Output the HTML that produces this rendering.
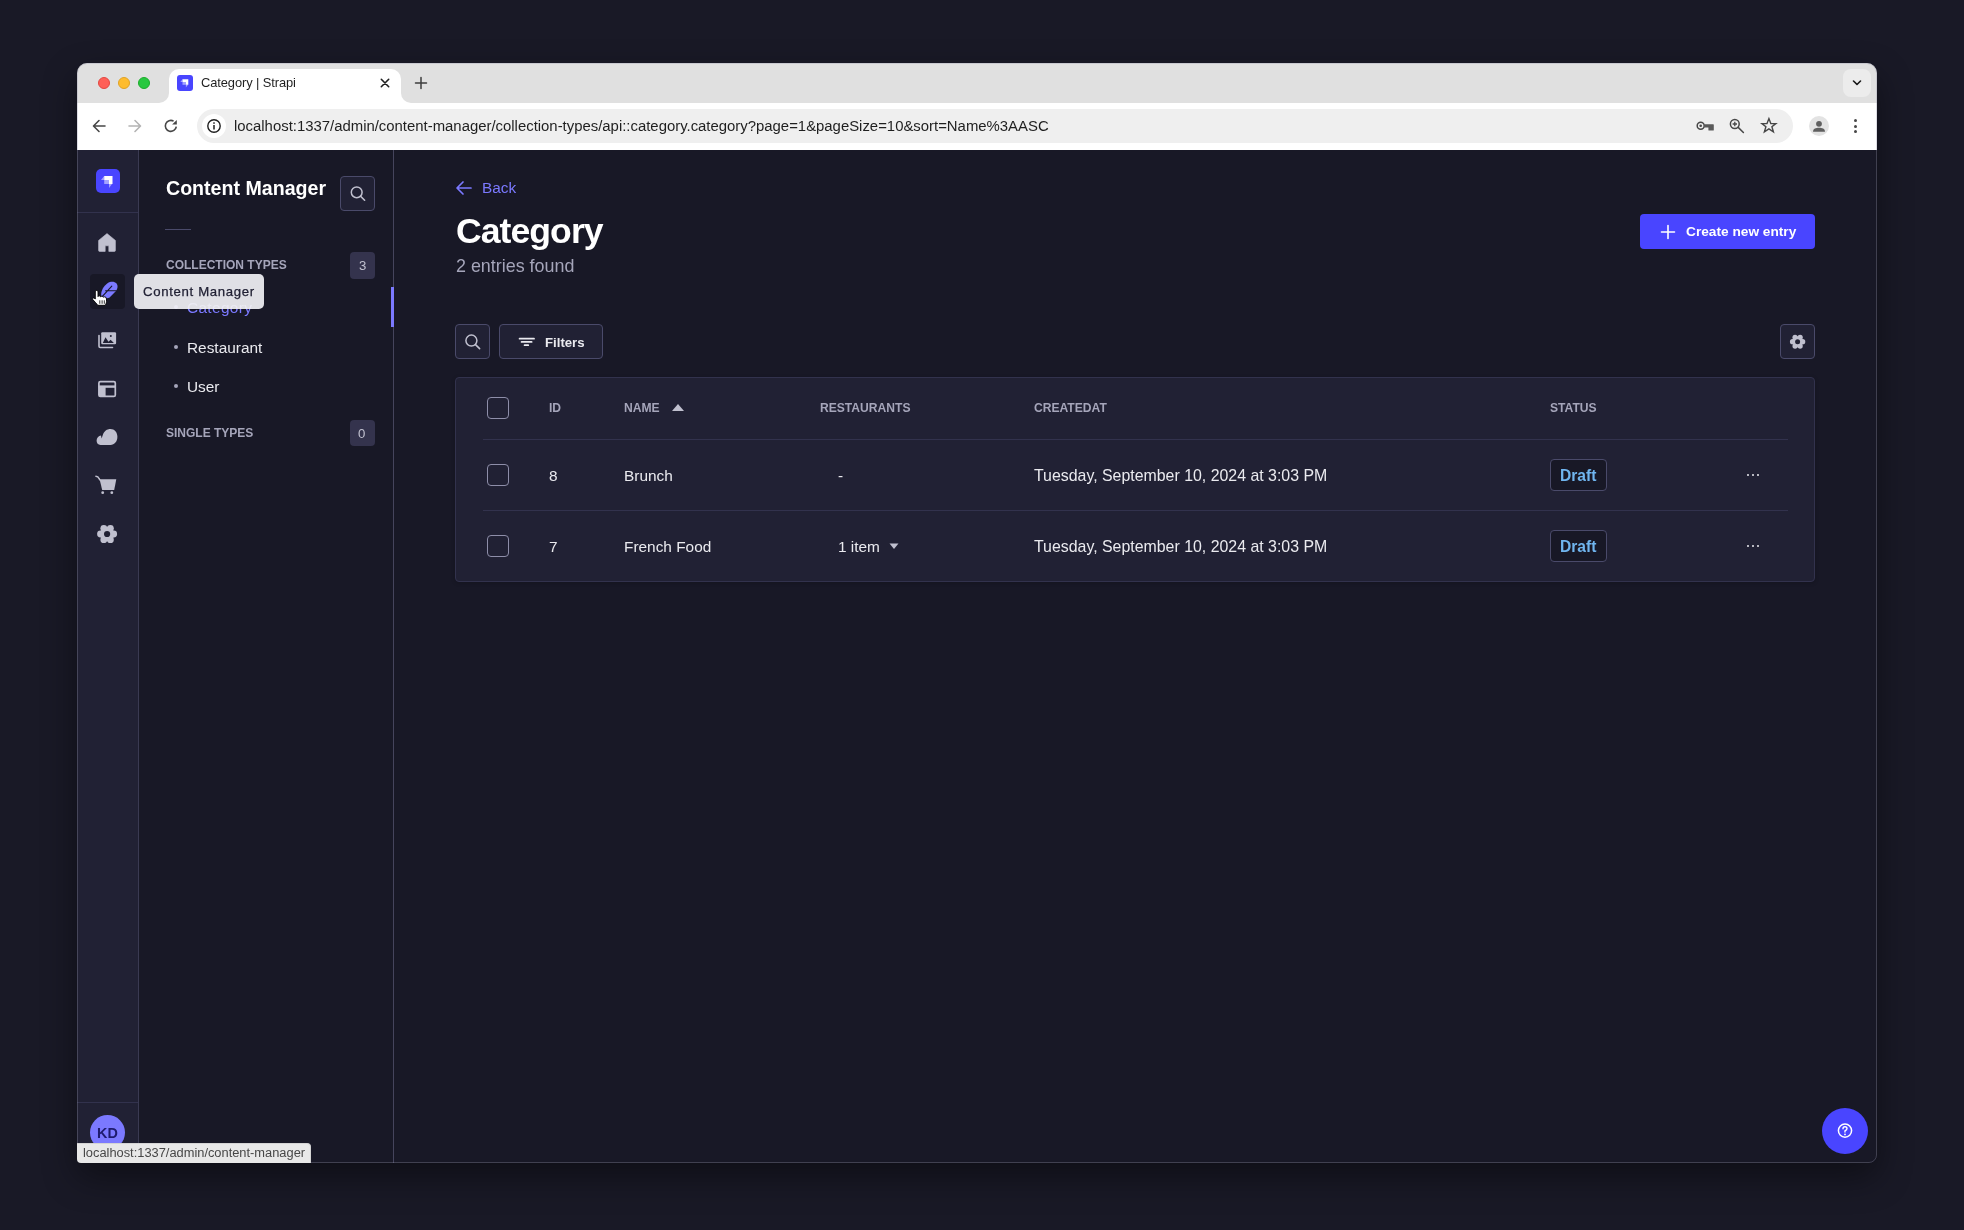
<!DOCTYPE html>
<html><head><meta charset="utf-8">
<style>
*{box-sizing:border-box;margin:0;padding:0}
html,body{width:1964px;height:1230px;overflow:hidden}
body{background:#191926;font-family:"Liberation Sans",sans-serif;position:relative}
.a{position:absolute}
.win{left:77px;top:63px;width:1800px;height:1100px;border-radius:10px 10px 8px 8px;overflow:hidden;background:#181826;box-shadow:0 14px 34px rgba(0,0,0,.42)}
.tabbar{left:77px;top:63px;width:1800px;height:40px;background:#e0e0e0;border-radius:10px 10px 0 0}
.toolbar{left:77px;top:103px;width:1800px;height:47px;background:#fff}
.dot{width:12px;height:12px;border-radius:50%}
.t{white-space:nowrap;line-height:1;will-change:transform}
</style></head>
<body>
<div class="a win"></div>
<div class="a tabbar"></div>
<div class="a toolbar"></div>
<!-- ============ APP ============ -->
<div class="a" style="left:77px;top:150px;width:1800px;height:1013px;background:#181826;border-radius:0 0 8px 8px;overflow:hidden"></div>
<!-- left nav -->
<div class="a" style="left:77px;top:150px;width:62px;height:1013px;background:#212134;border-right:1px solid #3a3a52;border-radius:0 0 0 10px"></div>
<div class="a" style="left:77px;top:212px;width:61px;height:1px;background:#32324d"></div>
<div class="a" style="left:77px;top:1102px;width:61px;height:1px;background:#32324d"></div>
<div class="a" style="left:96px;top:169px;width:24px;height:24px;background:#4945ff;border-radius:5px"></div>
<!-- subnav -->
<div class="a" style="left:393px;top:150px;width:1px;height:1013px;background:#45445c"></div>
<div class="a t" style="left:165.6px;top:179.1px;font-size:19.6px;color:#ffffff;font-weight:700;">Content Manager</div>
<div class="a" style="left:340px;top:176px;width:35px;height:35px;border:1px solid #4a4a6a;background:#212134;border-radius:4px"></div>
<div class="a" style="left:165px;top:228.5px;width:26px;height:1px;background:#4a4a6a"></div>
<div class="a t" style="left:165.6px;top:258.84px;font-size:12px;color:#a5a5ba;font-weight:700;">COLLECTION TYPES</div>
<div class="a" style="left:350px;top:252px;width:25px;height:26.5px;background:#34334d;border-radius:4px"></div>
<div class="a t" style="left:358.6px;top:258.83px;font-size:13.2px;color:#c0c0cf;font-weight:400;">3</div>
<div class="a t" style="left:187px;top:299.96px;font-size:15.4px;color:#7b79ff;font-weight:400;letter-spacing:0.35px">Category</div>
<div class="a" style="left:174px;top:304px;width:4px;height:4px;background:#7b79ff;border-radius:50%"></div>
<div class="a" style="left:391px;top:287px;width:3px;height:40px;background:#7b79ff"></div>
<div class="a t" style="left:187px;top:339.96px;font-size:15.4px;color:#eaeaef;font-weight:400;">Restaurant</div>
<div class="a" style="left:174px;top:344.5px;width:4px;height:4px;background:#a5a5ba;border-radius:50%"></div>
<div class="a t" style="left:187px;top:378.96px;font-size:15.4px;color:#eaeaef;font-weight:400;">User</div>
<div class="a" style="left:174px;top:383.5px;width:4px;height:4px;background:#a5a5ba;border-radius:50%"></div>
<div class="a t" style="left:165.6px;top:426.84px;font-size:12px;color:#a5a5ba;font-weight:700;">SINGLE TYPES</div>
<div class="a" style="left:350px;top:419.5px;width:25px;height:26.5px;background:#34334d;border-radius:4px"></div>
<div class="a t" style="left:358.3px;top:426.83px;font-size:13.2px;color:#c0c0cf;font-weight:400;">0</div>
<svg class="a" style="left:455px;top:180px" width="18" height="16" viewBox="0 0 18 16"><path d="M16 8H2.5M8 2L2 8L8 14" stroke="#7b79ff" stroke-width="1.7" fill="none" stroke-linecap="round" stroke-linejoin="round"/></svg>
<div class="a t" style="left:482.3px;top:180.46px;font-size:15.4px;color:#7b79ff;font-weight:400;">Back</div>
<div class="a t" style="left:455.5px;top:214.36px;font-size:35.6px;color:#ffffff;font-weight:700;letter-spacing:-0.95px">Category</div>
<div class="a t" style="left:456px;top:258.25px;font-size:17.9px;color:#a5a5ba;font-weight:400;">2 entries found</div>
<div class="a" style="left:1640px;top:214px;width:175px;height:35px;background:#4945ff;border-radius:4px"></div>
<svg class="a" style="left:1660px;top:224px" width="16" height="16" viewBox="0 0 16 16"><path d="M8 1.5V14.5M1.5 8H14.5" stroke="#fff" stroke-width="1.6" stroke-linecap="round"/></svg>
<div class="a t" style="left:1686px;top:225.20px;font-size:13.7px;color:#ffffff;font-weight:700;">Create new entry</div>
<div class="a" style="left:455px;top:324px;width:35px;height:35px;border:1px solid #4a4a6a;background:#212134;border-radius:4px"></div>
<div class="a" style="left:499px;top:324px;width:104px;height:35px;border:1px solid #4a4a6a;background:#212134;border-radius:4px"></div>
<div class="a t" style="left:544.6px;top:335.83px;font-size:13.2px;color:#eaeaef;font-weight:700;">Filters</div>
<div class="a" style="left:1780px;top:324px;width:35px;height:35px;border:1px solid #4a4a6a;background:#212134;border-radius:4px"></div>
<div class="a" style="left:455px;top:377px;width:1360px;height:205px;background:#212134;border:1px solid #32324d;border-radius:4px;box-shadow:0 1px 4px rgba(0,0,0,.2)"></div>
<div class="a" style="left:483px;top:439px;width:1305px;height:1px;background:#32324d"></div>
<div class="a" style="left:483px;top:510px;width:1305px;height:1px;background:#32324d"></div>
<div class="a" style="left:487px;top:397px;width:22px;height:22px;border:1px solid #8e8ea9;border-radius:4px;background:#212134"></div>
<div class="a" style="left:487px;top:464px;width:22px;height:22px;border:1px solid #8e8ea9;border-radius:4px;background:#212134"></div>
<div class="a" style="left:487px;top:535px;width:22px;height:22px;border:1px solid #8e8ea9;border-radius:4px;background:#212134"></div>
<div class="a t" style="left:549.2px;top:402.26px;font-size:12.1px;color:#a5a5ba;font-weight:700;">ID</div>
<div class="a t" style="left:624.3px;top:402.26px;font-size:12.1px;color:#a5a5ba;font-weight:700;">NAME</div>
<div class="a t" style="left:819.7px;top:402.26px;font-size:12.1px;color:#a5a5ba;font-weight:700;">RESTAURANTS</div>
<div class="a t" style="left:1033.8px;top:402.26px;font-size:12.1px;color:#a5a5ba;font-weight:700;">CREATEDAT</div>
<div class="a t" style="left:1549.5px;top:402.26px;font-size:12.1px;color:#a5a5ba;font-weight:700;">STATUS</div>
<svg class="a" style="left:671px;top:403px" width="14" height="9" viewBox="0 0 14 9"><path d="M1 8L7 1L13 8Z" fill="#c0c0cf"/></svg>
<div class="a t" style="left:549.3px;top:467.96px;font-size:15.4px;color:#eaeaef;font-weight:400;">8</div>
<div class="a t" style="left:624.3px;top:467.96px;font-size:15.4px;color:#eaeaef;font-weight:400;">Brunch</div>
<div class="a t" style="left:837.5px;top:467.96px;font-size:15.4px;color:#eaeaef;font-weight:400;">-</div>
<div class="a t" style="left:1033.8px;top:467.54px;font-size:15.9px;color:#eaeaef;font-weight:400;">Tuesday, September 10, 2024 at 3:03 PM</div>
<div class="a" style="left:1550px;top:459px;width:57px;height:32px;border:1px solid #4a4a6a;background:#181826;border-radius:4px"></div>
<div class="a t" style="left:1559.8px;top:467.79px;font-size:15.6px;color:#70b5ef;font-weight:700;">Draft</div>
<div class="a" style="left:1746.5px;top:474px;width:2.4px;height:2.4px;background:#eaeaef;border-radius:50%"></div>
<div class="a" style="left:1751.5px;top:474px;width:2.4px;height:2.4px;background:#eaeaef;border-radius:50%"></div>
<div class="a" style="left:1756.5px;top:474px;width:2.4px;height:2.4px;background:#eaeaef;border-radius:50%"></div>
<div class="a t" style="left:549.3px;top:538.96px;font-size:15.4px;color:#eaeaef;font-weight:400;">7</div>
<div class="a t" style="left:624.3px;top:538.96px;font-size:15.4px;color:#eaeaef;font-weight:400;">French Food</div>
<div class="a t" style="left:837.5px;top:538.96px;font-size:15.4px;color:#eaeaef;font-weight:400;">1 item</div>
<div class="a t" style="left:1033.8px;top:538.54px;font-size:15.9px;color:#eaeaef;font-weight:400;">Tuesday, September 10, 2024 at 3:03 PM</div>
<div class="a" style="left:1550px;top:530px;width:57px;height:32px;border:1px solid #4a4a6a;background:#181826;border-radius:4px"></div>
<div class="a t" style="left:1559.8px;top:538.79px;font-size:15.6px;color:#70b5ef;font-weight:700;">Draft</div>
<div class="a" style="left:1746.5px;top:545px;width:2.4px;height:2.4px;background:#eaeaef;border-radius:50%"></div>
<div class="a" style="left:1751.5px;top:545px;width:2.4px;height:2.4px;background:#eaeaef;border-radius:50%"></div>
<div class="a" style="left:1756.5px;top:545px;width:2.4px;height:2.4px;background:#eaeaef;border-radius:50%"></div>
<svg class="a" style="left:888px;top:542px" width="12" height="8" viewBox="0 0 12 8"><path d="M1.5 1.5H10.5L6 7Z" fill="#c0c0cf"/></svg>
<div class="a" style="left:1822px;top:1108px;width:46px;height:46px;background:#4945ff;border-radius:50%"></div>
<div class="a" style="left:90px;top:1115px;width:35px;height:35px;background:#7b79ff;border-radius:50%"></div>
<div class="a t" style="left:97.3px;top:1125.81px;font-size:14.4px;color:#1e1b6e;font-weight:700;">KD</div>
<svg class="a" style="left:96px;top:169px" width="24" height="24" viewBox="96 169 24 24"><path d="M104.2 175.9H112.5V184H109V180H104.2Z" fill="#fff"/><path d="M101 180L104.2 175.9V180Z" fill="#fff" opacity=".5"/><path d="M104.2 180H109V184H104.2Z" fill="#fff" opacity=".5"/><path d="M109 184H112L109 188Z" fill="#fff" opacity=".5"/></svg>
<svg class="a" style="left:96px;top:231px" width="22" height="22" viewBox="96 231 22 22"><path d="M107 233.6L115.4 240.4V250.4Q115.4 251.4 114.4 251.4H108.8V245.8H105.2V251.4H99.6Q98.6 251.4 98.6 250.4V240.4Z" fill="#c0c0cf" stroke="#c0c0cf" stroke-width=".6" stroke-linejoin="round"/></svg>
<div class="a" style="left:90px;top:274px;width:35px;height:35px;background:#181826;border-radius:4px"></div>
<svg class="a" style="left:98px;top:279px" width="22" height="22" viewBox="98 279 22 22"><path d="M101.2 295.5C100.8 291 103.5 286 107.5 283.2C110.5 281.2 114.5 281.2 116.4 283.3C118.2 285.3 117.8 288.5 116 291L109.6 297.6C107.5 298.6 103.2 298.6 101.2 295.5Z" fill="#7b79ff"/><path d="M101 297.8L111.8 286.2M105.6 290.8H116.4" stroke="#181826" stroke-width="1.1" stroke-linecap="round"/></svg>
<svg class="a" style="left:96px;top:330px" width="22" height="20" viewBox="96 330 22 20"><path d="M99 335.5V346.3Q99 347.5 100.2 347.5H112.5" stroke="#c0c0cf" stroke-width="1.6" fill="none" stroke-linecap="round"/><rect x="101.2" y="332.2" width="14.9" height="12" rx="1.2" fill="#c0c0cf"/><path d="M102.8 343L105.5 337.2L108.5 341.8L110.6 339.8L113.9 343Z" fill="#212134"/><circle cx="110.8" cy="336" r="1" fill="#212134"/></svg>
<svg class="a" style="left:96px;top:378px" width="22" height="22" viewBox="96 378 22 22"><rect x="98.9" y="381.6" width="16.4" height="14.8" rx="1.5" stroke="#c0c0cf" stroke-width="1.7" fill="none"/><rect x="98.5" y="385.4" width="17" height="2.4" fill="#c0c0cf"/><rect x="99" y="387" width="6.6" height="9" fill="#c0c0cf"/></svg>
<svg class="a" style="left:94px;top:426px" width="26" height="22" viewBox="94 426 26 22"><path d="M100.5 445C98 445 96.6 443 96.6 440.8C96.6 438 98.5 436 101 435.6L101.6 438.4L102.7 435.2C104 431 107 429 110.5 429C114.5 429 117.4 432.3 117.4 436.8C117.4 441.5 114.5 445 110.5 445Z" fill="#c0c0cf"/></svg>
<svg class="a" style="left:94px;top:474px" width="24" height="22" viewBox="94 474 24 22"><path d="M95.9 476.3Q98.2 476.3 99 478.5L99.8 479.8" stroke="#c0c0cf" stroke-width="1.5" fill="none" stroke-linecap="round"/><path d="M99.6 479.3H116.3L114.2 490H102.2Z" fill="#c0c0cf"/><circle cx="102.7" cy="492.7" r="1.4" fill="#c0c0cf"/><circle cx="111.8" cy="492.7" r="1.4" fill="#c0c0cf"/></svg>
<svg class="a" style="left:95px;top:522px" width="24" height="24" viewBox="95 522 24 24"><circle cx="107.1" cy="534" r="7.20" fill="#c0c0cf"/><circle cx="113.70" cy="534.00" r="3.40" fill="#c0c0cf"/><circle cx="110.40" cy="528.28" r="3.40" fill="#c0c0cf"/><circle cx="103.80" cy="528.28" r="3.40" fill="#c0c0cf"/><circle cx="100.50" cy="534.00" r="3.40" fill="#c0c0cf"/><circle cx="103.80" cy="539.72" r="3.40" fill="#c0c0cf"/><circle cx="110.40" cy="539.72" r="3.40" fill="#c0c0cf"/><circle cx="107.1" cy="534" r="3.1" fill="#212134"/></svg>
<svg class="a" style="left:348px;top:184px" width="20" height="20" viewBox="348 184 20 20"><circle cx="356.7" cy="192.3" r="5.4" stroke="#c0c0cf" stroke-width="1.5" fill="none"/><path d="M360.6 196.2L364.6 200.2" stroke="#c0c0cf" stroke-width="1.6" stroke-linecap="round"/></svg>
<svg class="a" style="left:462px;top:331px" width="22" height="22" viewBox="462 331 22 22"><circle cx="471.4" cy="340.6" r="5.5" stroke="#c0c0cf" stroke-width="1.5" fill="none"/><path d="M475.5 344.7L479.6 348.6" stroke="#c0c0cf" stroke-width="1.6" stroke-linecap="round"/></svg>
<svg class="a" style="left:516px;top:335px" width="22" height="14" viewBox="516 335 22 14"><path d="M519.6 338.7H534M521.6 341.9H531.6M524.6 345.2H528.2" stroke="#eaeaef" stroke-width="1.8" stroke-linecap="round"/></svg>
<svg class="a" style="left:1787px;top:331px" width="22" height="22" viewBox="1787 331 22 22"><circle cx="1797.6" cy="341.7" r="5.54" fill="#c0c0cf"/><circle cx="1802.68" cy="341.70" r="2.62" fill="#c0c0cf"/><circle cx="1800.14" cy="337.30" r="2.62" fill="#c0c0cf"/><circle cx="1795.06" cy="337.30" r="2.62" fill="#c0c0cf"/><circle cx="1792.52" cy="341.70" r="2.62" fill="#c0c0cf"/><circle cx="1795.06" cy="346.10" r="2.62" fill="#c0c0cf"/><circle cx="1800.14" cy="346.10" r="2.62" fill="#c0c0cf"/><circle cx="1797.6" cy="341.7" r="2.5" fill="#212134"/></svg>
<svg class="a" style="left:1834px;top:1120px" width="22" height="22" viewBox="1834 1120 22 22"><circle cx="1845" cy="1130.6" r="6.6" stroke="#fff" stroke-width="1.5" fill="none"/><path d="M1843 1128.8Q1843 1126.8 1845 1126.8Q1847 1126.8 1847 1128.6Q1847 1130 1845 1130.8V1132" stroke="#fff" stroke-width="1.4" fill="none" stroke-linecap="round"/><circle cx="1845" cy="1134.4" r=".9" fill="#fff"/></svg>

<div class="a" style="left:134px;top:274px;width:130px;height:35px;background:#e0e0e5;border-radius:5px"></div>
<div class="a" style="left:134px;top:274px;width:130px;height:35px;overflow:hidden;opacity:.55"><div class="a t" style="left:53px;top:25.96px;font-size:15.4px;color:#f4f3ff;font-weight:400;letter-spacing:0.35px">Category</div><div class="a" style="left:40px;top:31px;width:4px;height:4px;background:#f4f3ff;border-radius:50%"></div></div>
<div class="a t" style="left:143.4px;top:284.53px;font-size:13.2px;color:#212134;font-weight:400;letter-spacing:0.66px;-webkit-text-stroke:0.25px #212134">Content Manager</div>
<div class="a" style="left:77px;top:63px;width:1800px;height:1100px;border:1px solid rgba(150,150,170,.32);border-radius:10px 10px 8px 8px"></div>
<div class="a" style="left:77px;top:1143px;width:234px;height:20px;background:#e8e8e8;border-radius:0 4px 0 4px;border-top:1px solid #d4d4d4;border-right:1px solid #d4d4d4"></div>
<div class="a t" style="left:82.5px;top:1146.7px;font-size:12.85px;color:#474747;font-weight:400;">localhost:1337/admin/content-manager</div>

<!-- active tab -->
<div class="a" style="left:169px;top:69px;width:232px;height:34px;background:#fff;border-radius:10px 10px 0 0"></div>
<div class="a" style="left:159px;top:93px;width:10px;height:10px;background:#fff"></div>
<div class="a" style="left:149px;top:83px;width:20px;height:20px;background:#e0e0e0;border-radius:0 0 10px 0"></div>
<div class="a" style="left:401px;top:93px;width:10px;height:10px;background:#fff"></div>
<div class="a" style="left:401px;top:83px;width:20px;height:20px;background:#e0e0e0;border-radius:0 0 0 10px"></div>
<div class="a" style="left:177px;top:75px;width:16px;height:16px;background:#4945ff;border-radius:3px"></div>
<svg class="a" style="left:177px;top:75px" width="16" height="16" viewBox="177 75 16 16"><path d="M182.5 79.2H188.3V84.8H185.9V82H182.5Z" fill="#fff"/><path d="M180.3 82L182.5 79.2V82Z" fill="#fff" opacity=".5"/><path d="M182.5 82H185.9V84.8H182.5Z" fill="#fff" opacity=".5"/><path d="M185.9 84.8H188L185.9 87.5Z" fill="#fff" opacity=".5"/></svg>
<div class="a t" style="left:201px;top:76.6px;font-size:12.9px;color:#1f1f1f;letter-spacing:-0.1px">Category | Strapi</div>
<!-- traffic lights -->
<div class="a dot" style="left:98px;top:77px;background:#fe5f57;border:0.5px solid #e14640"></div>
<div class="a dot" style="left:118px;top:77px;background:#febc2e;border:0.5px solid #dfa123"></div>
<div class="a dot" style="left:138px;top:77px;background:#28c840;border:0.5px solid #1aab29"></div>

<!-- tab close & new tab -->
<svg class="a" style="left:379px;top:77px" width="12" height="12" viewBox="0 0 12 12"><path d="M2.3 2.3L9.7 9.7M9.7 2.3L2.3 9.7" stroke="#202020" stroke-width="1.6" stroke-linecap="round"/></svg>
<svg class="a" style="left:414px;top:76px" width="14" height="14" viewBox="0 0 14 14"><path d="M7 1.5V12.5M1.5 7H12.5" stroke="#3c3c3c" stroke-width="1.5" stroke-linecap="round"/></svg>
<!-- tab dropdown -->
<div class="a" style="left:1843px;top:69px;width:28px;height:28px;background:#ececec;border-radius:8px"></div>
<svg class="a" style="left:1851px;top:77px" width="12" height="12" viewBox="0 0 12 12"><path d="M2.5 4L6 7.5L9.5 4" stroke="#1a1a1a" stroke-width="1.6" fill="none" stroke-linecap="round" stroke-linejoin="round"/></svg>
<!-- nav buttons -->
<svg class="a" style="left:91px;top:118px" width="16" height="16" viewBox="0 0 16 16"><path d="M14 8H2.8M8 2.5L2.5 8L8 13.5" stroke="#474747" stroke-width="1.6" fill="none" stroke-linecap="round" stroke-linejoin="round"/></svg>
<svg class="a" style="left:127px;top:118px" width="16" height="16" viewBox="0 0 16 16"><path d="M2 8H13.2M8 2.5L13.5 8L8 13.5" stroke="#b4b4b4" stroke-width="1.6" fill="none" stroke-linecap="round" stroke-linejoin="round"/></svg>
<svg class="a" style="left:163px;top:118px" width="16" height="16" viewBox="0 0 16 16"><path d="M13.3 8.6A5.5 5.5 0 1 1 10.6 3.1" stroke="#474747" stroke-width="1.6" fill="none"/><path d="M9.1 6.6H13.8V1.9Z" fill="#474747"/></svg>
<!-- omnibox -->
<div class="a" style="left:197px;top:109px;width:1596px;height:34px;background:#efefef;border-radius:17px"></div>
<div class="a" style="left:202px;top:114px;width:24px;height:24px;background:#fff;border-radius:50%"></div>
<svg class="a" style="left:206px;top:118px" width="16" height="16" viewBox="0 0 16 16"><circle cx="8" cy="8" r="6.2" stroke="#1f1f1f" stroke-width="1.4" fill="none"/><rect x="7.25" y="7" width="1.5" height="4.5" fill="#1f1f1f"/><rect x="7.25" y="4.3" width="1.5" height="1.5" fill="#1f1f1f"/></svg>
<div class="a t" id="url" style="left:234px;top:119px;font-size:14.9px;color:#1f1f1f">localhost:1337/admin/content-manager/collection-types/api::category.category?page=1&amp;pageSize=10&amp;sort=Name%3AASC</div>
<!-- right toolbar icons -->
<svg class="a" style="left:1694px;top:116px" width="22" height="20" viewBox="1694 116 22 20"><circle cx="1700.7" cy="125.8" r="3.5" stroke="#474747" stroke-width="1.5" fill="none"/><circle cx="1700.7" cy="125.8" r="1.3" fill="#474747"/><path d="M1704.3 124.2H1713.2Q1713.8 124.2 1713.8 124.8V130Q1713.8 130.6 1713.2 130.6H1709Q1708.4 130.6 1708.4 130V127.4H1704.3Z" fill="#5a5a5a"/></svg>
<svg class="a" style="left:1728px;top:115px" width="18" height="20" viewBox="1728 115 18 20"><circle cx="1734.8" cy="124" r="4.4" stroke="#474747" stroke-width="1.5" fill="none"/><path d="M1732.6 124H1737M1734.8 121.8V126.2" stroke="#474747" stroke-width="1.3"/><path d="M1738.2 127.4L1743.4 132.5" stroke="#474747" stroke-width="1.5" stroke-linecap="round"/></svg>
<svg class="a" style="left:1759px;top:116px" width="19" height="19" viewBox="1759 116 19 19"><path d="M1768.9 118.6L1770.8 123.5L1775.9 123.6L1771.9 126.8L1773.4 131.8L1768.9 128.9L1764.4 131.8L1765.9 126.8L1761.9 123.6L1767 123.5Z" stroke="#474747" stroke-width="1.4" fill="none" stroke-linejoin="miter"/></svg>
<div class="a" style="left:1809px;top:116px;width:20px;height:20px;background:#e3e3e3;border-radius:50%"></div>
<svg class="a" style="left:1809px;top:116px" width="20" height="20" viewBox="0 0 20 20"><circle cx="10" cy="7.8" r="2.9" fill="#5f5f5f"/><path d="M4 15.7C4 12.5 7 11.7 10 11.7S16 12.5 16 15.7Z" fill="#5f5f5f"/></svg>
<div class="a" style="left:1853.5px;top:119px;width:3px;height:3px;background:#474747;border-radius:50%"></div>
<div class="a" style="left:1853.5px;top:124.5px;width:3px;height:3px;background:#474747;border-radius:50%"></div>
<div class="a" style="left:1853.5px;top:130px;width:3px;height:3px;background:#474747;border-radius:50%"></div>
<svg class="a" style="left:90px;top:288px" width="20" height="20" viewBox="90 288 20 20"><path d="M95.3 291.8Q95.3 290.4 96.65 290.4Q98 290.4 98 291.8V296.6Q98.4 295.8 99.3 295.8Q100.4 295.8 100.6 296.8Q101 296.2 101.9 296.2Q103 296.2 103.2 297.3Q103.6 296.8 104.4 296.8Q106.5 296.8 106.5 299V301.5Q106.5 303 105.8 304.2L105.2 305.3H97.8L97.2 304.5Q96.5 303.4 95.5 302.5L92.8 299.6Q92.2 298.8 92.8 298.2Q93.6 297.6 94.6 298.4L95.3 299.1Z" fill="#fff" stroke="#000" stroke-width="0.9" stroke-linejoin="round"/><path d="M99.8 300.3V303.8M102.1 300.3V303.8M104.3 300.3V303.8" stroke="#000" stroke-width=".8"/></svg>
</body></html>
